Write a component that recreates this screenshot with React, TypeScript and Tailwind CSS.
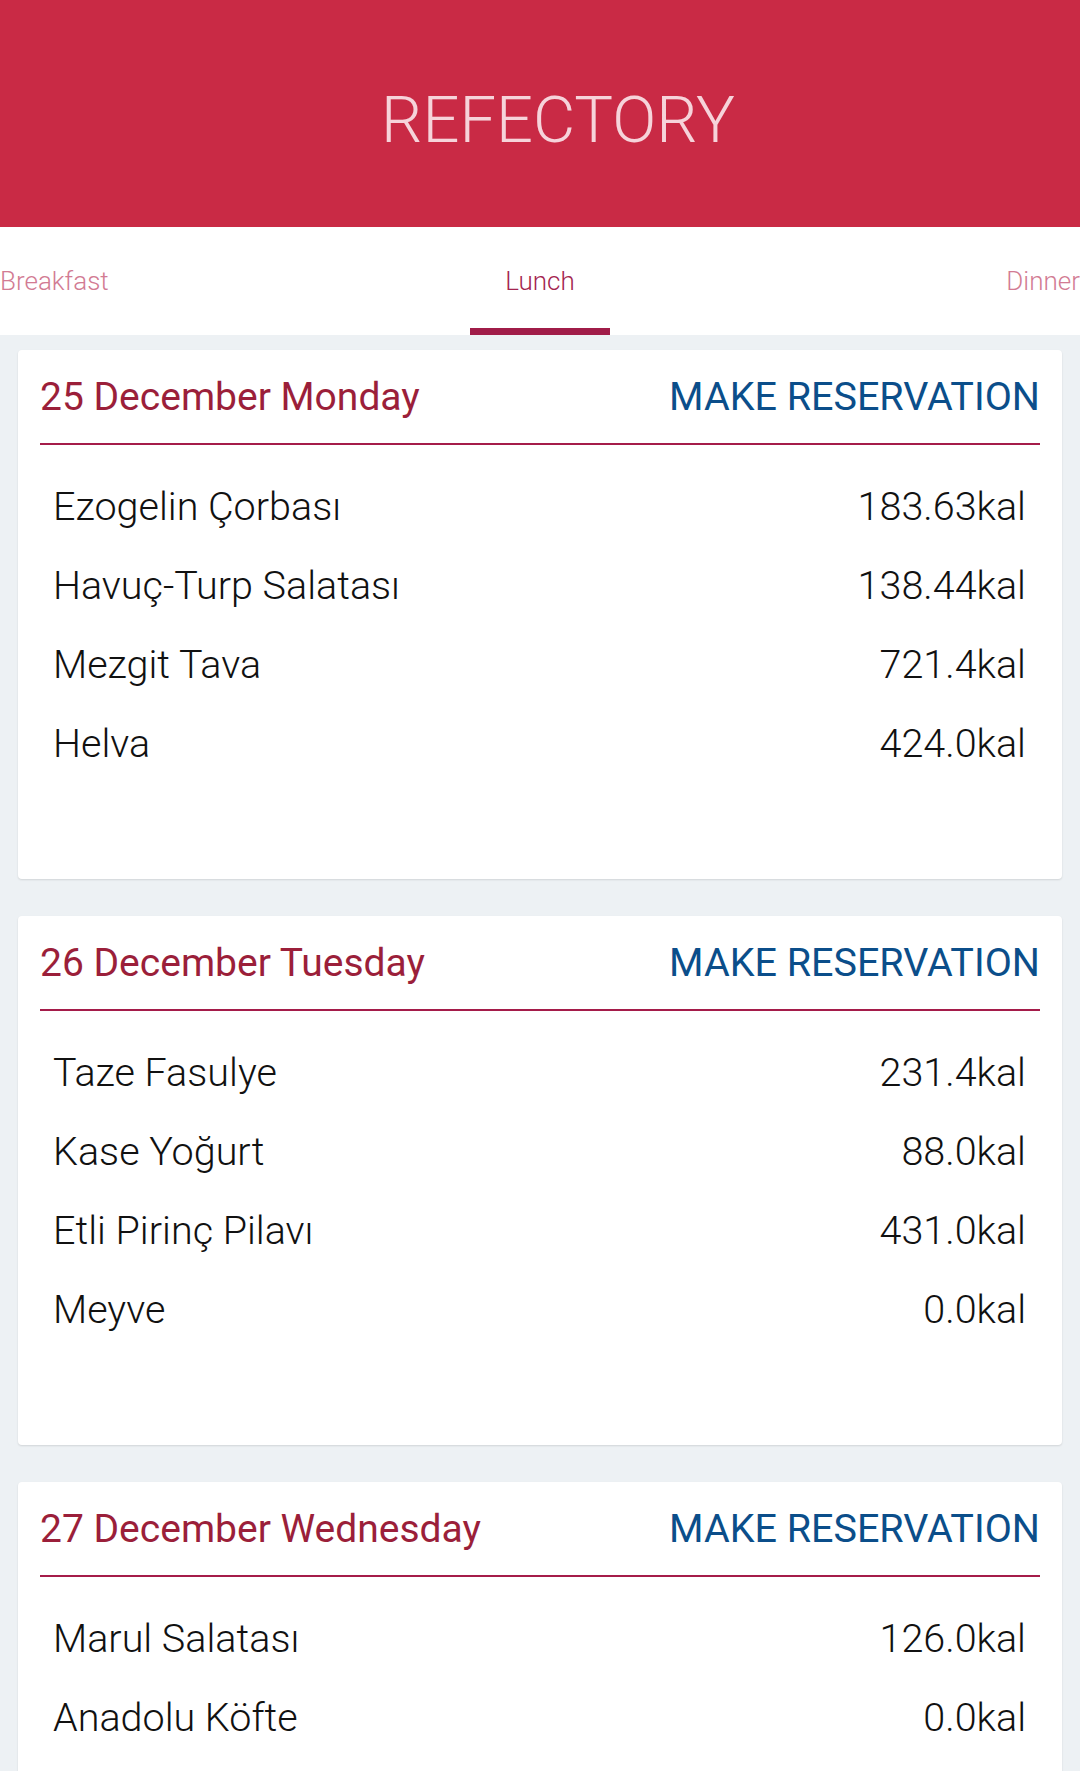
import React from "react";

type Day = { title: string; items: [string, string][] };

const days: Day[] = [
  {
    title: "25 December Monday",
    items: [
      ["Ezogelin Çorbası", "183.63kal"],
      ["Havuç-Turp Salatası", "138.44kal"],
      ["Mezgit Tava", "721.4kal"],
      ["Helva", "424.0kal"],
    ],
  },
  {
    title: "26 December Tuesday",
    items: [
      ["Taze Fasulye", "231.4kal"],
      ["Kase Yoğurt", "88.0kal"],
      ["Etli Pirinç Pilavı", "431.0kal"],
      ["Meyve", "0.0kal"],
    ],
  },
  {
    title: "27 December Wednesday",
    items: [
      ["Marul Salatası", "126.0kal"],
      ["Anadolu Köfte", "0.0kal"],
    ],
  },
];

function DayCard({ day }: { day: Day }) {
  return (
    <div className="bg-white rounded-[4px] shadow-[0_1px_2px_rgba(0,0,0,0.12)] px-[22px] pt-[22px] pb-[96px]">
      <div className="h-[50px] flex items-center justify-between">
        <span className="text-[39px] leading-none text-[#9b1f3a] font-normal">{day.title}</span>
        <span className="text-[39.5px] leading-none text-[#0b4e8a] font-normal">MAKE RESERVATION</span>
      </div>
      <div className="mt-[21px] h-[2px] bg-[#a51c4a]" />
      <div className="pt-[22px] pl-[13px] pr-[14px]">
        {day.items.map(([name, kcal]) => (
          <div key={name} className="h-[79px] flex items-center justify-between text-[39.5px] leading-none font-light text-[#111111]">
            <span>{name}</span>
            <span>{kcal}</span>
          </div>
        ))}
      </div>
    </div>
  );
}

export default function App() {
  return (
    <div className="w-[1080px] h-[1771px] overflow-hidden bg-[#edf1f4] font-['Roboto',sans-serif]">
      <div className="h-[227px] bg-[#c92a45] flex items-center justify-center pl-[36px] pt-[13px]">
        <span className="text-[65px] leading-none font-light text-[#f6d3da]">REFECTORY</span>
      </div>
      <div className="h-[108px] bg-white grid grid-cols-3 text-[26px] font-light">
        <div className="flex items-center justify-start text-[#d27b93]">Breakfast</div>
        <div className="relative flex items-center justify-center text-[#a4254f]">
          Lunch
          <div className="absolute bottom-0 left-1/2 -translate-x-1/2 w-[140px] h-[7px] bg-[#a01c48]" />
        </div>
        <div className="flex items-center justify-end text-[#d27b93]">Dinner</div>
      </div>
      <div className="px-[18px] pt-[15px] flex flex-col gap-[37px]">
        {days.map((d) => (
          <DayCard key={d.title} day={d} />
        ))}
      </div>
    </div>
  );
}
